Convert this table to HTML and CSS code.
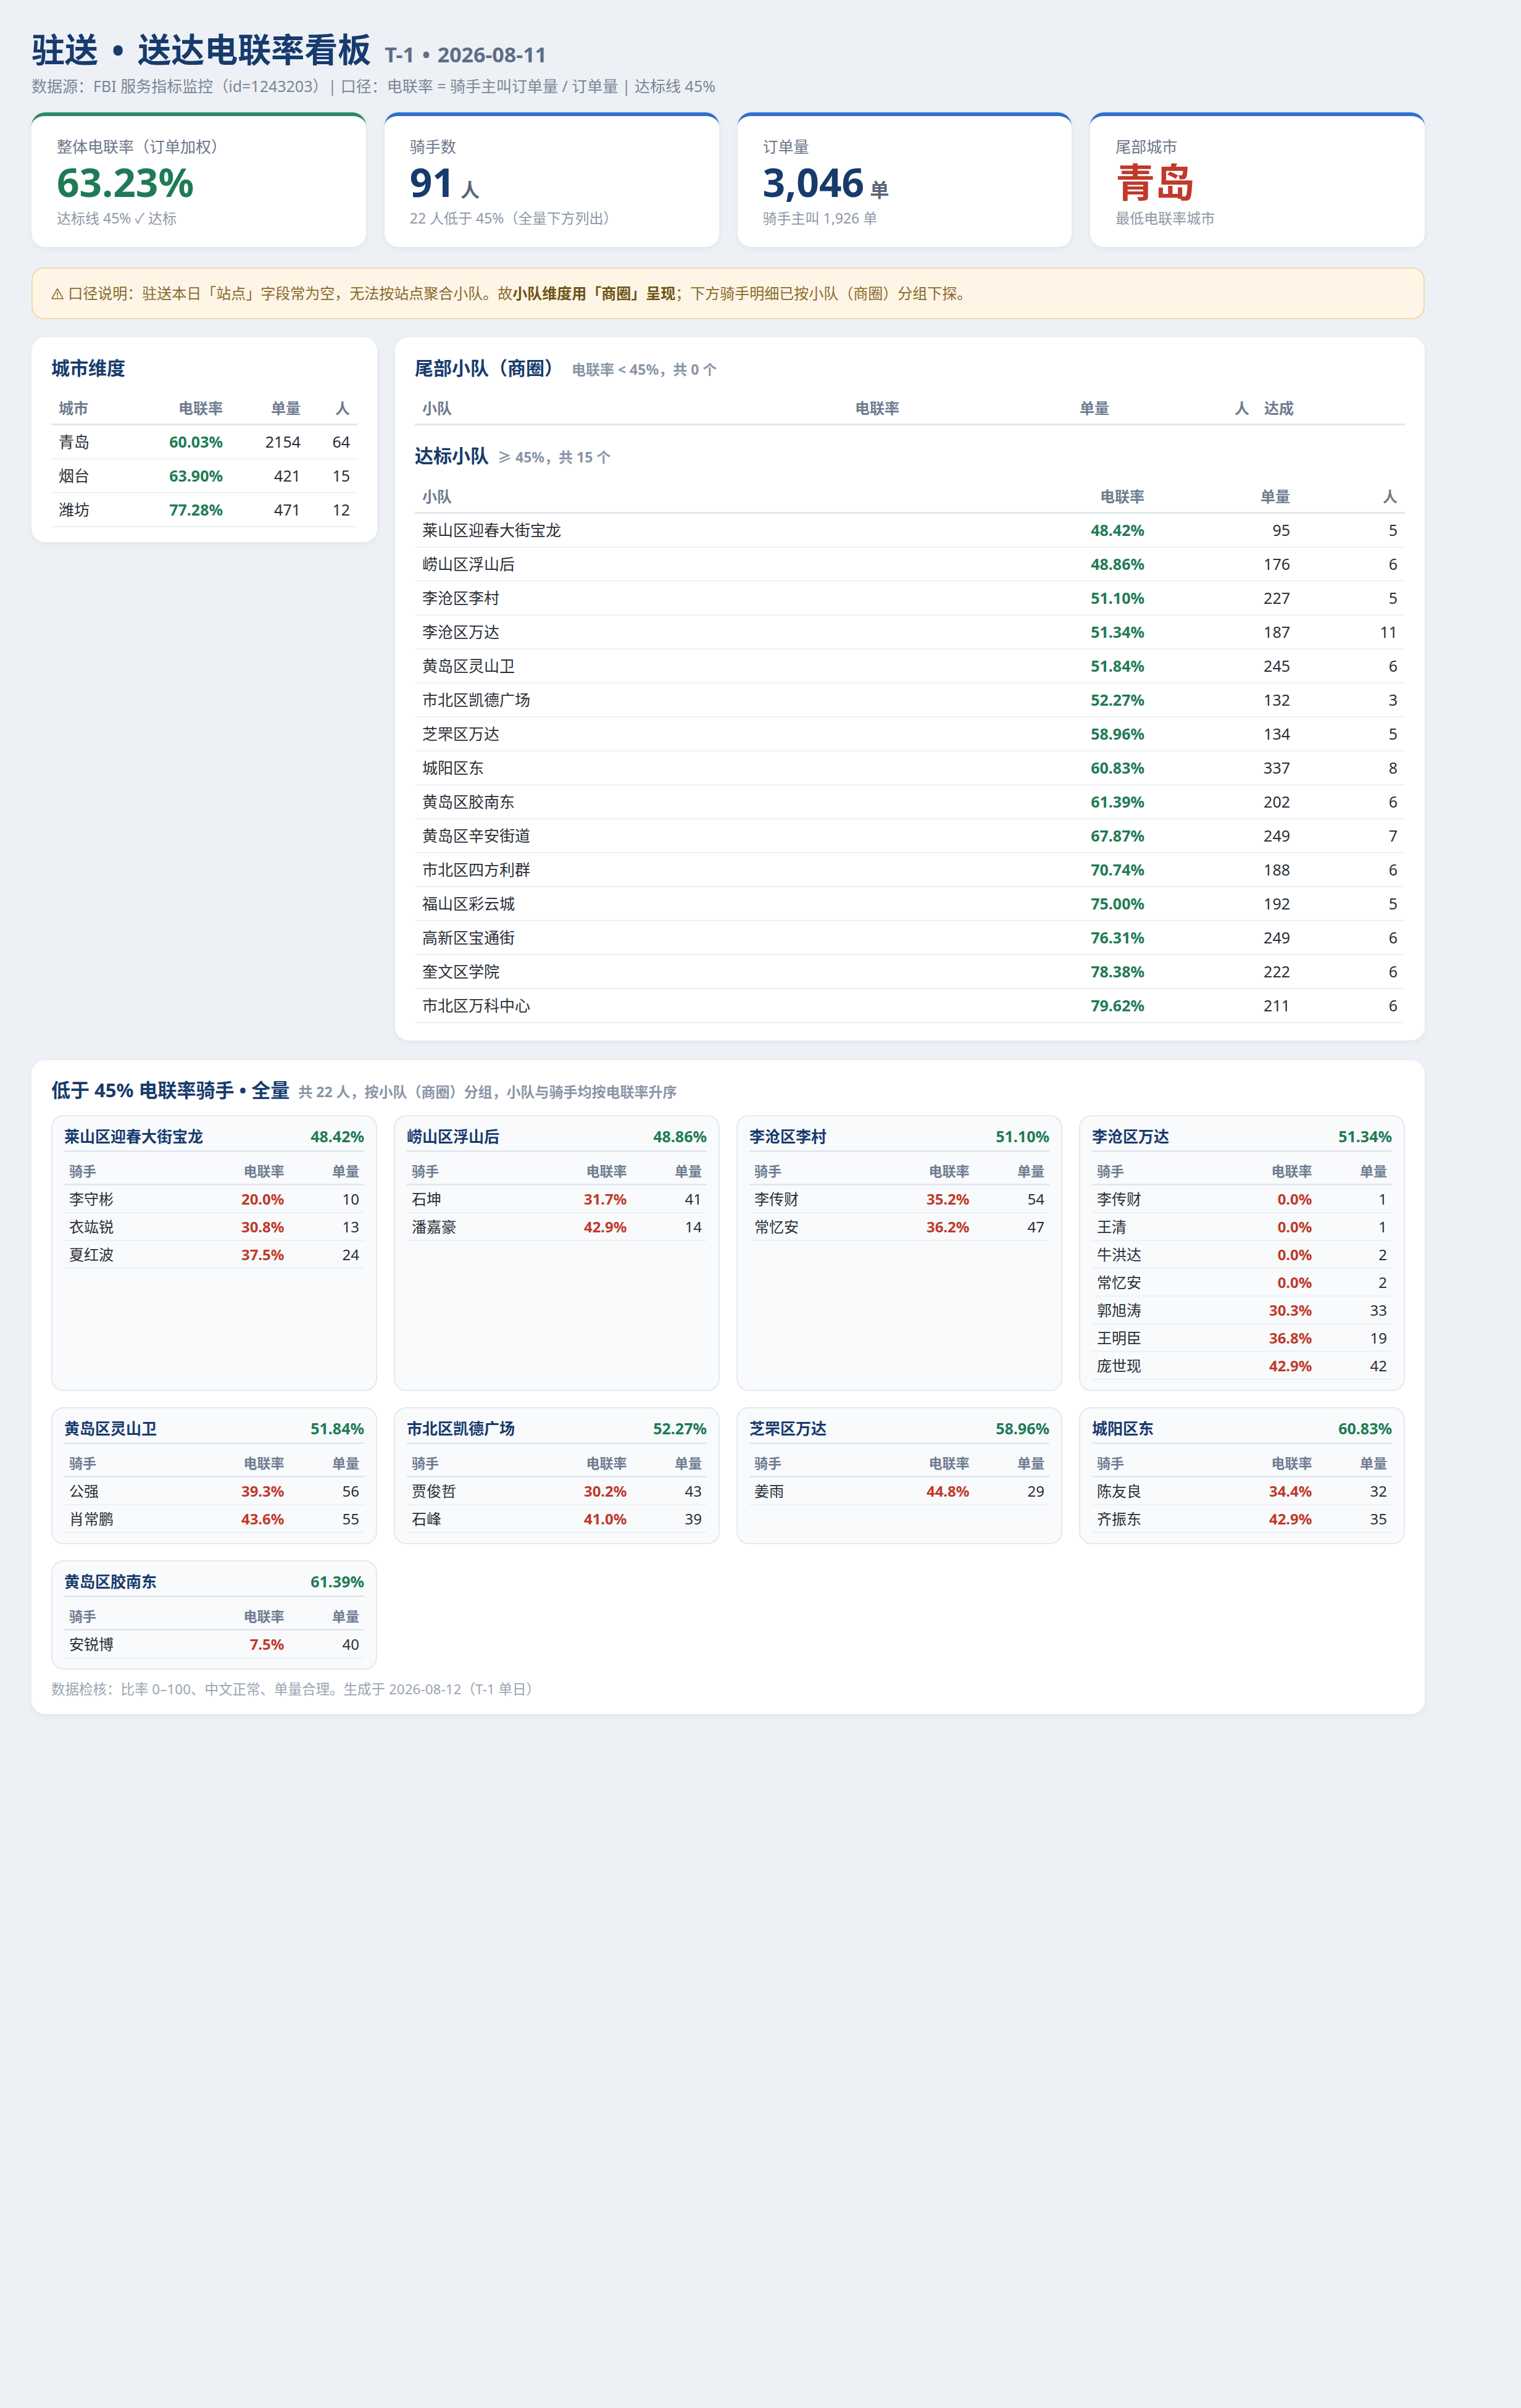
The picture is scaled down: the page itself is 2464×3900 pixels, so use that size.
FILE: index.html
```html
<!DOCTYPE html>
<html lang="zh-CN">
<head>
<meta charset="utf-8">
<title>驻送 • 送达电联率看板</title>
<link rel="stylesheet" href="styles.css">
</head>
<body>
<div class="page">
  <header class="hdr">
    <h1 class="ttl">驻送<span class="dot">•</span>送达电联率看板<span class="ttl-sub">T-1<span class="dot-s">•</span>2026-08-11</span></h1>
    <p class="src">数据源：FBI 服务指标监控（id=1243203）| 口径：电联率 = 骑手主叫订单量 / 订单量 | 达标线 45%</p>
  </header>

  <section class="kpis">
    <div class="kpi kpi-green">
      <div class="kpi-label">整体电联率（订单加权）</div>
      <div class="kpi-val v-green">63.23%</div>
      <div class="kpi-sub">达标线 45% ✓ 达标</div>
    </div>
    <div class="kpi">
      <div class="kpi-label">骑手数</div>
      <div class="kpi-val v-navy">91<span class="unit">人</span></div>
      <div class="kpi-sub">22 人低于 45%（全量下方列出）</div>
    </div>
    <div class="kpi">
      <div class="kpi-label">订单量</div>
      <div class="kpi-val v-navy">3,046<span class="unit">单</span></div>
      <div class="kpi-sub">骑手主叫 1,926 单</div>
    </div>
    <div class="kpi">
      <div class="kpi-label">尾部城市</div>
      <div class="kpi-val v-red">青岛</div>
      <div class="kpi-sub">最低电联率城市</div>
    </div>
  </section>

  <div class="notice"><svg class="warn" viewBox="0 0 24 24" width="22" height="22"><path d="M12 3 L22 20.5 H2 Z" fill="none" stroke="currentColor" stroke-width="1.8" stroke-linejoin="round"/><path d="M12 9.5 V14.5" stroke="currentColor" stroke-width="1.8" stroke-linecap="round"/><circle cx="12" cy="17.4" r="1.1" fill="currentColor"/></svg> 口径说明：驻送本日「站点」字段常为空，无法按站点聚合小队。故<b>小队维度用「商圈」呈现</b>；下方骑手明细已按小队（商圈）分组下探。</div>

  <section class="mid">
    <div class="card card-city">
      <h2 class="card-h">城市维度</h2>
      <table class="tbl">
        <colgroup><col class="cc1"><col class="cc2"><col class="cc3"><col class="cc4"></colgroup>
        <thead><tr><th class="l">城市</th><th>电联率</th><th>单量</th><th>人</th></tr></thead>
        <tbody>
          <tr><td class="l">青岛</td><td class="rate">60.03%</td><td>2154</td><td>64</td></tr>
          <tr><td class="l">烟台</td><td class="rate">63.90%</td><td>421</td><td>15</td></tr>
          <tr><td class="l">潍坊</td><td class="rate">77.28%</td><td>471</td><td>12</td></tr>
        </tbody>
      </table>
    </div>

    <div class="card card-team">
      <h2 class="card-h">尾部小队（商圈）<span class="card-sub">电联率 &lt; 45%，共 0 个</span></h2>
      <table class="tbl">
        <colgroup><col class="ct1"><col class="ct2"><col class="ct3"><col class="ct4"><col class="ct5"></colgroup>
        <thead><tr><th class="l">小队</th><th>电联率</th><th>单量</th><th>人</th><th class="l">达成</th></tr></thead>
        <tbody></tbody>
      </table>

      <h3 class="card-h card-h2">达标小队<span class="card-sub">≥ 45%，共 15 个</span></h3>
      <table class="tbl">
        <colgroup><col class="cs1"><col class="cs2"><col class="cs3"><col class="cs4"></colgroup>
        <thead><tr><th class="l">小队</th><th>电联率</th><th>单量</th><th>人</th></tr></thead>
        <tbody>
          <tr><td class="l">莱山区迎春大街宝龙</td><td class="rate">48.42%</td><td>95</td><td>5</td></tr>
          <tr><td class="l">崂山区浮山后</td><td class="rate">48.86%</td><td>176</td><td>6</td></tr>
          <tr><td class="l">李沧区李村</td><td class="rate">51.10%</td><td>227</td><td>5</td></tr>
          <tr><td class="l">李沧区万达</td><td class="rate">51.34%</td><td>187</td><td>11</td></tr>
          <tr><td class="l">黄岛区灵山卫</td><td class="rate">51.84%</td><td>245</td><td>6</td></tr>
          <tr><td class="l">市北区凯德广场</td><td class="rate">52.27%</td><td>132</td><td>3</td></tr>
          <tr><td class="l">芝罘区万达</td><td class="rate">58.96%</td><td>134</td><td>5</td></tr>
          <tr><td class="l">城阳区东</td><td class="rate">60.83%</td><td>337</td><td>8</td></tr>
          <tr><td class="l">黄岛区胶南东</td><td class="rate">61.39%</td><td>202</td><td>6</td></tr>
          <tr><td class="l">黄岛区辛安街道</td><td class="rate">67.87%</td><td>249</td><td>7</td></tr>
          <tr><td class="l">市北区四方利群</td><td class="rate">70.74%</td><td>188</td><td>6</td></tr>
          <tr><td class="l">福山区彩云城</td><td class="rate">75.00%</td><td>192</td><td>5</td></tr>
          <tr><td class="l">高新区宝通街</td><td class="rate">76.31%</td><td>249</td><td>6</td></tr>
          <tr><td class="l">奎文区学院</td><td class="rate">78.38%</td><td>222</td><td>6</td></tr>
          <tr><td class="l">市北区万科中心</td><td class="rate">79.62%</td><td>211</td><td>6</td></tr>
        </tbody>
      </table>
    </div>
  </section>

  <section class="card card-riders">
    <h2 class="card-h card-h3">低于 45% 电联率骑手 • 全量<span class="card-sub">共 22 人，按小队（商圈）分组，小队与骑手均按电联率升序</span></h2>
    <div class="groups">
      <div class="grp">
        <div class="grp-h"><span class="grp-name">莱山区迎春大街宝龙</span><span class="grp-rate">48.42%</span></div>
        <table class="gtbl">
          <colgroup><col class="g1"><col class="g2"><col class="g3"></colgroup>
          <thead><tr><th class="l">骑手</th><th>电联率</th><th>单量</th></tr></thead>
          <tbody>
            <tr><td class="l">李守彬</td><td class="bad">20.0%</td><td>10</td></tr>
            <tr><td class="l">衣竑锐</td><td class="bad">30.8%</td><td>13</td></tr>
            <tr><td class="l">夏红波</td><td class="bad">37.5%</td><td>24</td></tr>
          </tbody>
        </table>
      </div>
      <div class="grp">
        <div class="grp-h"><span class="grp-name">崂山区浮山后</span><span class="grp-rate">48.86%</span></div>
        <table class="gtbl">
          <colgroup><col class="g1"><col class="g2"><col class="g3"></colgroup>
          <thead><tr><th class="l">骑手</th><th>电联率</th><th>单量</th></tr></thead>
          <tbody>
            <tr><td class="l">石坤</td><td class="bad">31.7%</td><td>41</td></tr>
            <tr><td class="l">潘嘉豪</td><td class="bad">42.9%</td><td>14</td></tr>
          </tbody>
        </table>
      </div>
      <div class="grp">
        <div class="grp-h"><span class="grp-name">李沧区李村</span><span class="grp-rate">51.10%</span></div>
        <table class="gtbl">
          <colgroup><col class="g1"><col class="g2"><col class="g3"></colgroup>
          <thead><tr><th class="l">骑手</th><th>电联率</th><th>单量</th></tr></thead>
          <tbody>
            <tr><td class="l">李传财</td><td class="bad">35.2%</td><td>54</td></tr>
            <tr><td class="l">常忆安</td><td class="bad">36.2%</td><td>47</td></tr>
          </tbody>
        </table>
      </div>
      <div class="grp">
        <div class="grp-h"><span class="grp-name">李沧区万达</span><span class="grp-rate">51.34%</span></div>
        <table class="gtbl">
          <colgroup><col class="g1"><col class="g2"><col class="g3"></colgroup>
          <thead><tr><th class="l">骑手</th><th>电联率</th><th>单量</th></tr></thead>
          <tbody>
            <tr><td class="l">李传财</td><td class="bad">0.0%</td><td>1</td></tr>
            <tr><td class="l">王清</td><td class="bad">0.0%</td><td>1</td></tr>
            <tr><td class="l">牛洪达</td><td class="bad">0.0%</td><td>2</td></tr>
            <tr><td class="l">常忆安</td><td class="bad">0.0%</td><td>2</td></tr>
            <tr><td class="l">郭旭涛</td><td class="bad">30.3%</td><td>33</td></tr>
            <tr><td class="l">王明臣</td><td class="bad">36.8%</td><td>19</td></tr>
            <tr><td class="l">庞世现</td><td class="bad">42.9%</td><td>42</td></tr>
          </tbody>
        </table>
      </div>
      <div class="grp">
        <div class="grp-h"><span class="grp-name">黄岛区灵山卫</span><span class="grp-rate">51.84%</span></div>
        <table class="gtbl">
          <colgroup><col class="g1"><col class="g2"><col class="g3"></colgroup>
          <thead><tr><th class="l">骑手</th><th>电联率</th><th>单量</th></tr></thead>
          <tbody>
            <tr><td class="l">公强</td><td class="bad">39.3%</td><td>56</td></tr>
            <tr><td class="l">肖常鹏</td><td class="bad">43.6%</td><td>55</td></tr>
          </tbody>
        </table>
      </div>
      <div class="grp">
        <div class="grp-h"><span class="grp-name">市北区凯德广场</span><span class="grp-rate">52.27%</span></div>
        <table class="gtbl">
          <colgroup><col class="g1"><col class="g2"><col class="g3"></colgroup>
          <thead><tr><th class="l">骑手</th><th>电联率</th><th>单量</th></tr></thead>
          <tbody>
            <tr><td class="l">贾俊哲</td><td class="bad">30.2%</td><td>43</td></tr>
            <tr><td class="l">石峰</td><td class="bad">41.0%</td><td>39</td></tr>
          </tbody>
        </table>
      </div>
      <div class="grp">
        <div class="grp-h"><span class="grp-name">芝罘区万达</span><span class="grp-rate">58.96%</span></div>
        <table class="gtbl">
          <colgroup><col class="g1"><col class="g2"><col class="g3"></colgroup>
          <thead><tr><th class="l">骑手</th><th>电联率</th><th>单量</th></tr></thead>
          <tbody>
            <tr><td class="l">姜雨</td><td class="bad">44.8%</td><td>29</td></tr>
          </tbody>
        </table>
      </div>
      <div class="grp">
        <div class="grp-h"><span class="grp-name">城阳区东</span><span class="grp-rate">60.83%</span></div>
        <table class="gtbl">
          <colgroup><col class="g1"><col class="g2"><col class="g3"></colgroup>
          <thead><tr><th class="l">骑手</th><th>电联率</th><th>单量</th></tr></thead>
          <tbody>
            <tr><td class="l">陈友良</td><td class="bad">34.4%</td><td>32</td></tr>
            <tr><td class="l">齐振东</td><td class="bad">42.9%</td><td>35</td></tr>
          </tbody>
        </table>
      </div>
      <div class="grp">
        <div class="grp-h"><span class="grp-name">黄岛区胶南东</span><span class="grp-rate">61.39%</span></div>
        <table class="gtbl">
          <colgroup><col class="g1"><col class="g2"><col class="g3"></colgroup>
          <thead><tr><th class="l">骑手</th><th>电联率</th><th>单量</th></tr></thead>
          <tbody>
            <tr><td class="l">安锐博</td><td class="bad">7.5%</td><td>40</td></tr>
          </tbody>
        </table>
      </div>
    </div>
    <p class="foot">数据检核：比率 0–100、中文正常、单量合理。生成于 2026-08-12（T-1 单日）</p>
  </section>
</div>
</body>
</html>
```

FILE: styles.css
```css
* { box-sizing: border-box; }
html, body { margin: 0; padding: 0; }
body {
  background: #edf1f6;
  font-family: "Noto Sans", "Noto Sans CJK SC", sans-serif;
  color: #2a2f37;
}
.page {
  width: 2257px;
  margin-left: 51px;
  padding-top: 48px;
  padding-bottom: 80px;
}

/* header */
.ttl {
  margin: 0;
  font-size: 54px;
  line-height: 65px;
  font-weight: 700;
  color: #183b6d;
}
.dot { margin: 0 22px; }
.ttl-sub {
  font-size: 34px;
  line-height: 1;
  font-weight: 700;
  color: #5d6d84;
  margin-left: 22px;
}
.dot-s { margin: 0 12px; }
.src {
  margin: 8px 0 0;
  font-size: 25px;
  line-height: 36px;
  color: #7b8698;
}

/* KPI cards */
.kpis {
  display: grid;
  grid-template-columns: repeat(4, 1fr);
  gap: 30px;
  margin-top: 25px;
}
.kpi {
  background: #fff;
  border-top: 6px solid #2f6fce;
  border-radius: 22px;
  padding: 32px 41px;
  box-shadow: 0 3px 10px rgba(20, 40, 80, 0.06);
}
.kpi-green { border-top-color: #2b8a65; }
.kpi-label {
  font-size: 25px;
  line-height: 34px;
  color: #6b7689;
}
.kpi-val {
  margin-top: 6px;
  font-size: 64px;
  line-height: 70px;
  font-weight: 700;
}
.v-green { color: #1e7b55; }
.v-navy { color: #163b6c; }
.v-red { color: #c0392b; }
.unit {
  font-size: 31px;
  line-height: 1;
  color: #5b6577;
  margin-left: 9px;
}
.kpi-sub {
  margin-top: 8px;
  font-size: 23px;
  line-height: 30px;
  color: #8e98a7;
}

/* notice */
.notice {
  margin-top: 33px;
  background: #fef5e6;
  border: 2px solid #f1d9ad;
  border-radius: 20px;
  padding: 22px 29px;
  font-size: 24px;
  line-height: 36px;
  color: #8a6a2c;
}
.notice b { color: #6e5214; font-weight: 700; }
.warn { vertical-align: -3px; }

/* cards */
.mid {
  display: grid;
  grid-template-columns: 560px 1fr;
  gap: 29px;
  align-items: start;
  margin-top: 29px;
}
.card {
  background: #fff;
  border-radius: 22px;
  padding: 29px 32px 28px;
  box-shadow: 0 3px 10px rgba(20, 40, 80, 0.06);
}
.card-city { padding-bottom: 24px; }
.card-h {
  margin: 0;
  font-size: 30px;
  line-height: 42px;
  font-weight: 700;
  color: #183b6d;
}
.card-h2 { margin-top: 28px; }
.card-h3 { font-size: 31px; }
.card-sub {
  font-size: 23px;
  line-height: 1;
  font-weight: 700;
  color: #8995a8;
  margin-left: 14px;
}

/* main tables */
.tbl {
  width: 100%;
  border-collapse: separate;
  border-spacing: 0;
  table-layout: fixed;
  margin-top: 19px;
}
.card-h2 + .tbl { margin-top: 20px; }
.tbl th {
  padding: 8px 12px;
  font-size: 24px;
  line-height: 34px;
  font-weight: 700;
  color: #6f7c90;
  text-align: right;
  border-bottom: 3px solid #e2e8f0;
  white-space: nowrap;
}
.tbl td {
  padding: 9px 12px;
  font-size: 25px;
  line-height: 35px;
  text-align: right;
  color: #2a2f37;
  border-bottom: 2px solid #eef2f6;
  white-space: nowrap;
}
.tbl .l { text-align: left; }
.tbl td.rate { color: #1e7b55; font-weight: 700; }

.cc1 { width: 160px; }
.cc2 { width: 130px; }
.cc3 { width: 126px; }
.cc4 { width: 80px; }

.ct1 { width: 628px; }
.ct2 { width: 169px; }
.ct3 { width: 340px; }
.ct4 { width: 227px; }
.ct5 { width: 240px; }

.cs1 { width: 994px; }
.cs2 { width: 200px; }
.cs3 { width: 236px; }
.cs4 { width: 174px; }

/* riders */
.card-riders {
  margin-top: 32px;
  padding: 27px 32px 24px;
}
.groups {
  display: grid;
  grid-template-columns: repeat(4, 1fr);
  column-gap: 27px;
  row-gap: 26px;
  margin-top: 20px;
}
.grp {
  background: #f8fafc;
  border: 2px solid #e4e9f0;
  border-radius: 20px;
  padding: 14px 19px 16px;
}
.grp-h {
  display: flex;
  justify-content: space-between;
  align-items: baseline;
  padding-bottom: 5px;
  border-bottom: 3px solid #e2e8f0;
  font-size: 25px;
  line-height: 36px;
  font-weight: 700;
}
.grp-name { color: #183b6d; }
.grp-rate { color: #1e7b55; }
.gtbl {
  width: 100%;
  border-collapse: separate;
  border-spacing: 0;
  table-layout: fixed;
  margin-top: 6px;
}
.gtbl th {
  padding: 8px 8px 5px;
  font-size: 22px;
  line-height: 32px;
  font-weight: 700;
  color: #6f7c90;
  text-align: right;
  border-bottom: 3px solid #e2e8f0;
}
.gtbl td {
  padding: 5px 8px;
  font-size: 24px;
  line-height: 33px;
  text-align: right;
  color: #2a2f37;
  border-bottom: 2px solid #edf1f6;
  white-space: nowrap;
}
.gtbl .l { text-align: left; }
.gtbl td.bad { color: #c0392b; font-weight: 700; }
.g1 { width: 44%; }
.g2 { width: 31%; }
.g3 { width: 25%; }

.foot {
  margin: 16px 0 0;
  font-size: 22.5px;
  line-height: 32px;
  color: #9aa4b3;
}
```
